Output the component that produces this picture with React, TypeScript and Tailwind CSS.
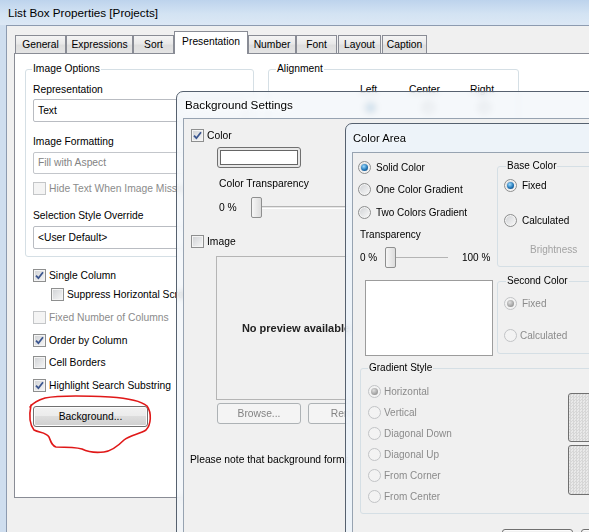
import React from 'react';

const btn =
  'flex items-center justify-center rounded-[3px] border border-[#707070] bg-[linear-gradient(#f2f2f2_0%,#ebebeb_50%,#dddddd_50%,#cfcfcf_100%)] shadow-[inset_0_0_0_1px_#fcfcfc]';
const btnDis =
  'flex items-center justify-center rounded-[3px] border border-[#adb2b5] bg-[#f4f4f4] text-[#838383]';

function Check({ checked = false, disabled = false }: { checked?: boolean; disabled?: boolean }) {
  return (
    <span
      className={`flex h-[13px] w-[13px] shrink-0 items-center justify-center border ${
        disabled
          ? 'border-[#c4c6c8] bg-[#f4f4f4]'
          : 'border-[#8e8f8f] bg-[linear-gradient(135deg,#cfd1d4,#f7f7f7)] shadow-[inset_0_0_0_1px_#f4f4f4]'
      }`}
    >
      {checked && (
        <svg width="9" height="9" viewBox="0 0 9 9">
          <path d="M1 4.6 L3.4 7.2 L8 1.2" fill="none" stroke="#3b568f" strokeWidth="1.8" />
        </svg>
      )}
    </span>
  );
}

function Radio({ checked = false, disabled = false }: { checked?: boolean; disabled?: boolean }) {
  return (
    <span
      className={`flex h-[13px] w-[13px] shrink-0 items-center justify-center rounded-full border ${
        disabled
          ? 'border-[#c2c4c6] bg-[#f3f3f3]'
          : 'border-[#8e8f8f] bg-[linear-gradient(135deg,#cfd1d4,#fafafa)] shadow-[inset_0_0_0_1px_#f4f4f4]'
      }`}
    >
      {checked && (
        <span
          className={`h-[7px] w-[7px] rounded-full ${
            disabled
              ? 'bg-[radial-gradient(circle_at_40%_35%,#e0e0e0,#9a9a9a_70%,#7d7d7d)]'
              : 'bg-[radial-gradient(circle_at_40%_35%,#9fdcff,#2277b8_55%,#0c3866)]'
          }`}
        />
      )}
    </span>
  );
}

const tabs = [
  { t: 'General', c: 'w-[51px] ml-[1px]' },
  { t: 'Expressions', c: 'w-[67px]' },
  { t: 'Sort', c: 'w-[41px]' },
  { t: 'Presentation', c: 'w-[74px]', sel: true },
  { t: 'Number', c: 'w-[48px]' },
  { t: 'Font', c: 'w-[41px]' },
  { t: 'Layout', c: 'w-[43px] ml-[1px]' },
  { t: 'Caption', c: 'w-[45px] ml-[1px]' },
];

function MainWindow() {
  return (
    <div className="absolute left-0 top-0 flex h-[600px] w-[780px] flex-col">
      <div className="flex h-[25px] shrink-0 items-center bg-[linear-gradient(180deg,#bdd3ec_0%,#d3e3f3_55%,#dce8f5_100%)] pl-[8px] text-[11.7px]">
        List Box Properties [Projects]
      </div>
      <div className="flex flex-1">
        <div className="w-[6px] shrink-0 bg-[#cfdeef]" />
        <div className="min-w-0 flex-1 border-l border-t border-[#8d9bb0] bg-[#f0f0f0] pl-[7px] pt-[5px]">
          <div className="flex h-[22px] items-end">
            {tabs.map((tb) =>
              tb.sel ? (
                <div
                  key={tb.t}
                  className={`relative z-10 -mb-px flex h-[23px] shrink-0 items-center justify-center border border-b-0 border-[#898c95] bg-white pb-[2px] ${tb.c}`}
                >
                  {tb.t}
                </div>
              ) : (
                <div
                  key={tb.t}
                  className={`flex h-[18px] shrink-0 items-center justify-center border border-b-0 border-[#898c95] bg-[linear-gradient(#f4f4f4,#e9e9e9_45%,#dedede_55%,#e4e4e4)] ${tb.c}`}
                >
                  {tb.t}
                </div>
              )
            )}
          </div>
          <div className="h-[445px] w-[760px] border border-[#898c95] bg-white">
            <div className="flex items-start">
              <fieldset className="ml-[10px] mt-[9px] w-[229px] shrink-0 rounded-[3px] border border-[#d5dfe5] px-[7px] pb-[7px]">
                <legend className="-ml-[1px] px-[1px] leading-[12px]">Image Options</legend>
                <div className="flex flex-col">
                  <div className="mt-[9px] h-[12px]">Representation</div>
                  <div className="mt-[3px] flex h-[23px] items-center rounded-[2px] border border-[#b9bcc2] bg-white pl-[4px]">
                    Text
                  </div>
                  <div className="mt-[14px] h-[12px]">Image Formatting</div>
                  <div className="mt-[4px] flex h-[22px] items-center rounded-[2px] border border-[#c3c6cb] bg-white pl-[4px] text-[#838383]">
                    Fill with Aspect
                  </div>
                  <div className="mt-[8px] flex h-[13px] items-center gap-[3px] whitespace-nowrap text-[#8b8b8b]">
                    <Check disabled />
                    <span>Hide Text When Image Missing</span>
                  </div>
                  <div className="mt-[15px] h-[12px]">Selection Style Override</div>
                  <div className="mt-[4px] flex h-[23px] items-center rounded-[2px] border border-[#b9bcc2] bg-white pl-[4px]">
                    &lt;User Default&gt;
                  </div>
                </div>
              </fieldset>
              <fieldset className="ml-[14px] mt-[9px] h-[120px] w-[251px] shrink-0 rounded-[3px] border border-[#d5dfe5]">
                <legend className="ml-[7px] px-[1px] leading-[12px]">Alignment</legend>
                <div className="mt-[9px] flex h-[12px] pl-[91px]">
                  <span className="w-[49px]">Left</span>
                  <span className="w-[61px]">Center</span>
                  <span>Right</span>
                </div>
                <div className="mt-[5px] flex pl-[95px]">
                  <Radio checked />
                  <span className="ml-[45px]">
                    <Radio />
                  </span>
                  <span className="ml-[43px]">
                    <Radio />
                  </span>
                </div>
              </fieldset>
            </div>
            <div className="mt-[12px] flex flex-col pl-[18px]">
              <div className="flex h-[13px] items-center gap-[3px]">
                <Check checked />
                <span>Single Column</span>
              </div>
              <div className="ml-[18px] mt-[6px] flex h-[13px] items-center gap-[3px] whitespace-nowrap">
                <Check />
                <span>Suppress Horizontal Scrollbar</span>
              </div>
              <div className="mt-[10px] flex h-[13px] items-center gap-[3px] text-[#8b8b8b]">
                <Check disabled />
                <span>Fixed Number of Columns</span>
              </div>
              <div className="mt-[10px] flex h-[13px] items-center gap-[3px]">
                <Check checked />
                <span>Order by Column</span>
              </div>
              <div className="mt-[9px] flex h-[13px] items-center gap-[3px]">
                <Check />
                <span>Cell Borders</span>
              </div>
              <div className="mt-[10px] flex h-[13px] items-center gap-[3px] whitespace-nowrap">
                <Check checked />
                <span>Highlight Search Substring</span>
              </div>
              <div className={`mt-[14px] h-[21px] w-[115px] ${btn}`}>Background...</div>
            </div>
          </div>
        </div>
      </div>
    </div>
  );
}

function BackgroundSettings() {
  return (
    <div className="absolute left-[176px] top-[91px] flex h-[470px] w-[480px] flex-col rounded-t-[7px] border border-[#56616f] bg-[rgba(241,245,250,0.72)] pl-[6px] backdrop-blur-[3px]">
      <div className="flex h-[26px] items-center pl-[2px] text-[11.7px] [text-shadow:0_0_6px_#fff,0_0_3px_#fff]">
        Background Settings
      </div>
      <div className="flex flex-1 flex-col border border-[#97a3b1] bg-[#f0f0f0]">
        <div className="ml-[7px] mt-[10px] flex h-[13px] items-center gap-[3px]">
          <Check checked />
          <span>Color</span>
        </div>
        <div className="ml-[33px] mt-[5px] h-[21px] w-[84px] rounded-[3px] border border-[#707070] bg-[#e8e8e8] p-[2px]">
          <div className="h-full w-full border border-[#666] bg-white" />
        </div>
        <div className="ml-[35px] mt-[10px] h-[12px]">Color Transparency</div>
        <div className="ml-[35px] mt-[7px] flex h-[21px] items-center">
          <span className="w-[32px]">0 %</span>
          <div className="relative h-[21px] w-[140px]">
            <div className="absolute left-[5px] right-0 top-[9px] h-[3px] border border-[#b4b4b4] border-b-white bg-[#e6e6e6]" />
            <div className="absolute left-0 top-0 h-[21px] w-[11px] rounded-[2px] border border-[#8e8f8f] bg-[linear-gradient(90deg,#f6f6f6,#dcdcdc)]" />
          </div>
        </div>
        <div className="ml-[7px] mt-[17px] flex h-[13px] items-center gap-[3px]">
          <Check />
          <span>Image</span>
        </div>
        <div className="ml-[32px] mt-[8px] flex h-[144px] w-[160px] items-center justify-center border border-[#b5b5b5] bg-[#f0f0f0] whitespace-nowrap text-[11px] font-bold text-[#222]">
          No preview available
        </div>
        <div className="ml-[33px] mt-[3px] flex">
          <div className={`h-[21px] w-[84px] ${btnDis}`}>Browse...</div>
          <div className={`ml-[7px] h-[21px] w-[84px] ${btnDis}`}>Remove</div>
        </div>
        <div className="ml-[6px] mt-[30px] h-[12px] w-[158px] overflow-hidden whitespace-nowrap">
          Please note that background formatting
        </div>
      </div>
    </div>
  );
}

function Opt({ checked = false, disabled = false, label, gap = 'gap-[5px]' }: { checked?: boolean; disabled?: boolean; label: string; gap?: string }) {
  return (
    <div className={`flex h-[13px] items-center whitespace-nowrap ${gap} ${disabled ? 'text-[#8b8b8b]' : ''}`}>
      <Radio checked={checked} disabled={disabled} />
      <span>{label}</span>
    </div>
  );
}

function ColorArea() {
  return (
    <div className="absolute left-[345px] top-[123px] flex h-[460px] w-[330px] flex-col rounded-t-[7px] border border-[#56616f] bg-[rgba(236,243,250,0.85)] pl-[6px] backdrop-blur-[3px]">
      <div className="flex h-[28px] items-center pl-[1px] text-[11.2px] [text-shadow:0_0_6px_#fff]">Color Area</div>
      <div className="flex flex-1 flex-col border border-[#97a3b1] bg-[#f0f0f0] text-[10px]">
        <div className="flex items-start">
          <div className="flex w-[144px] shrink-0 flex-col">
            <div className="ml-[5px] mt-[8px]">
              <Opt checked label="Solid Color" />
            </div>
            <div className="ml-[5px] mt-[9px]">
              <Opt label="One Color Gradient" />
            </div>
            <div className="ml-[5px] mt-[10px]">
              <Opt label="Two Colors Gradient" />
            </div>
            <div className="ml-[7px] mt-[10px] h-[12px]">Transparency</div>
            <div className="ml-[7px] mt-[6px] flex h-[21px] items-center">
              <span className="w-[25px]">0 %</span>
              <div className="relative h-[21px] w-[63px]">
                <div className="absolute left-[5px] right-0 top-[10px] h-px bg-[#b4b4b4]" />
                <div className="absolute left-0 top-0 h-[21px] w-[11px] rounded-[2px] border border-[#8e8f8f] bg-[linear-gradient(90deg,#f6f6f6,#dcdcdc)]" />
              </div>
              <span className="ml-[14px]">100 %</span>
            </div>
          </div>
          <fieldset className="mt-[7px] w-[130px] shrink-0 rounded-[3px] border border-[#d5dfe5] pb-[10px]">
            <legend className="ml-[8px] px-[1px] leading-[12px]">Base Color</legend>
            <div className="ml-[6px] mt-[7px]">
              <Opt checked label="Fixed" />
            </div>
            <div className="ml-[6px] mt-[22px]">
              <Opt label="Calculated" />
            </div>
            <div className="ml-[32px] mt-[17px] h-[12px] text-[#a3a3a3]">Brightness</div>
          </fieldset>
        </div>
        <div className="flex items-start">
          <div className="ml-[12px] mt-[12px] h-[76px] w-[128px] shrink-0 border border-[#9c9c9c] bg-white" />
          <fieldset className="ml-[4px] mt-[7px] w-[130px] shrink-0 rounded-[3px] border border-[#d5dfe5] pb-[11px]">
            <legend className="ml-[8px] px-[1px] leading-[12px]">Second Color</legend>
            <div className="ml-[6px] mt-[10px]">
              <Opt checked disabled label="Fixed" />
            </div>
            <div className="ml-[6px] mt-[19px]">
              <Opt disabled label="Calculated" gap="gap-[3px]" />
            </div>
          </fieldset>
        </div>
        <fieldset className="ml-[7px] mt-[6px] w-[300px] rounded-[3px] border border-[#d5dfe5] pb-[10px]">
          <legend className="ml-[7px] px-[1px] leading-[12px]">Gradient Style</legend>
          <div className="flex">
            <div className="flex w-[200px] shrink-0 flex-col gap-[8px] pl-[7px] pt-[11px]">
              <Opt checked disabled label="Horizontal" gap="gap-[3px]" />
              <Opt disabled label="Vertical" gap="gap-[3px]" />
              <Opt disabled label="Diagonal Down" gap="gap-[3px]" />
              <Opt disabled label="Diagonal Up" gap="gap-[3px]" />
              <Opt disabled label="From Corner" gap="gap-[3px]" />
              <Opt disabled label="From Center" gap="gap-[3px]" />
            </div>
            <div className="ml-[7px] flex flex-col pt-[19px]">
              <div className="h-[49px] w-[60px] rounded-[3px] border border-[#707070] bg-[repeating-conic-gradient(#d6d6d6_0_25%,#e9e9e9_0_50%)] bg-[length:3px_3px]" />
              <div className="mt-[3px] h-[50px] w-[60px] rounded-[3px] border border-[#707070] bg-[repeating-conic-gradient(#d6d6d6_0_25%,#e9e9e9_0_50%)] bg-[length:3px_3px]" />
            </div>
          </div>
        </fieldset>
        <div className="mt-[15px] flex">
          <div className={`ml-[149px] h-[23px] w-[71px] ${btn}`} />
          <div className={`ml-[8px] h-[23px] w-[71px] ${btn}`} />
        </div>
      </div>
    </div>
  );
}

export default function App() {
  return (
    <div className="relative h-[532px] w-[589px] overflow-hidden bg-[#f0f0f0] font-['Liberation_Sans',Arial,sans-serif] text-[10.3px] leading-[12px] text-black">
      <MainWindow />
      <BackgroundSettings />
      <ColorArea />
      <svg className="pointer-events-none absolute left-0 top-0" width="589" height="532" viewBox="0 0 589 532">
        <path
          d="M31,405 C29,415 30,425 34,430 C40,433 46,432 49,437 C51,442 52,446 56,447 C65,447 75,447 82,449 C88,452 96,453 104,452 C112,451 118,446 124,440 C130,435 140,434 146,430 C151,425 152,413 147,406 C140,400 125,398 110,397 C90,396 60,395 45,398 C38,400 33,403 30,407"
          fill="none"
          stroke="#e01818"
          strokeWidth="1.6"
          strokeLinecap="round"
        />
      </svg>
    </div>
  );
}
